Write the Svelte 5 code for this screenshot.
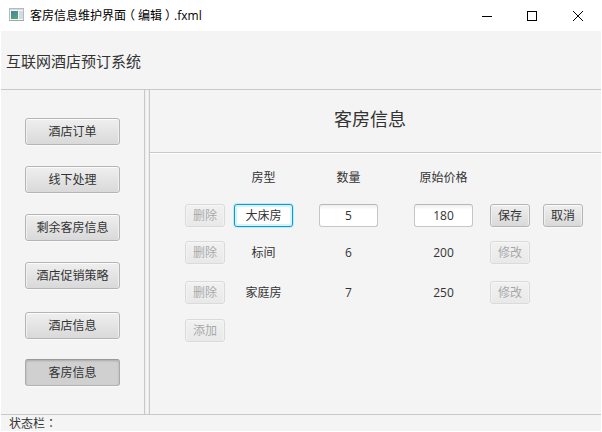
<script>
  const menu = ['酒店订单', '线下处理', '剩余客房信息', '酒店促销策略', '酒店信息', '客房信息'];
  const rooms = [
    { type: '标间', count: 6, price: 200 },
    { type: '家庭房', count: 7, price: 250 }
  ];
  let active = $state('客房信息');
  let draft = $state({ type: '大床房', count: '5', price: '180' });
</script>

<div class="window">
  <div class="titlebar">
    <svg class="app-icon" width="16" height="14" viewBox="0 0 16 14">
      <defs>
        <linearGradient id="pane" x1="0" y1="0" x2="0.6" y2="1">
          <stop offset="0" stop-color="#4a7fa8" />
          <stop offset="1" stop-color="#4fa876" />
        </linearGradient>
      </defs>
      <rect x="0.5" y="0.5" width="14" height="12" fill="#f4f6f7" stroke="#b4babf" />
      <rect x="1" y="1" width="13" height="1" fill="#d5dade" />
      <rect x="2" y="3" width="7" height="8" fill="url(#pane)" />
      <rect x="10" y="3" width="4" height="8" fill="#d3dce1" />
      <path d="M0 12.5H15" stroke="#a0a6aa" />
    </svg>
    <span class="title">客房信息维护界面<span class="paren">（</span>编辑<span class="paren">）</span>.fxml</span>
    <svg class="controls" width="103" height="12" viewBox="0 0 103 12" fill="none" stroke="#000">
      <path d="M0 6.5H10" />
      <rect x="45.5" y="1.5" width="9" height="9" />
      <path d="M91 1L101 11M101 1L91 11" />
    </svg>
  </div>
  <header>互联网酒店预订系统</header>
  <main>
    <nav>
      {#each menu as item}
        <button class:active={active === item} onclick={() => (active = item)}>{item}</button>
      {/each}
    </nav>
    <div class="divider"></div>
    <section>
      <h1>客房信息</h1>
      <div class="table">
        <div class="row head">
          <span></span><span>房型</span><span>数量</span><span>原始价格</span>
        </div>
        <div class="row edit">
          <button disabled>删除</button>
          <input class="focused" bind:value={draft.type} />
          <input bind:value={draft.count} />
          <input bind:value={draft.price} />
          <button>保存</button>
          <button>取消</button>
        </div>
        {#each rooms as room}
          <div class="row">
            <button disabled>删除</button>
            <span>{room.type}</span><span>{room.count}</span><span>{room.price}</span>
            <button disabled>修改</button>
          </div>
        {/each}
        <div class="row add"><button disabled>添加</button></div>
      </div>
    </section>
  </main>
  <footer>状态栏<span class="colon">：</span></footer>
</div>

<style>
  :global(body) {
    margin: 0;
    background: #fff;
  }
  .window {
    box-sizing: border-box;
    width: 602px;
    height: 432px;
    padding: 0 1px 1px;
    display: flex;
    flex-direction: column;
    background: #fff;
    color: #333;
    font: 12px 'Open Sans', 'Noto Sans CJK SC', sans-serif;
  }
  .titlebar {
    height: 31px;
    flex: none;
    display: flex;
    align-items: center;
    padding: 0 16px 0 8px;
    box-sizing: border-box;
    color: #000;
  }
  .app-icon {
    margin: 0 5px 1px 0;
  }
  .title {
    flex: 1;
    white-space: nowrap;
    line-height: 17px;
  }
  .paren {
    padding: 0 3px;
    font-feature-settings: 'halt';
  }
  .colon {
    font-family: 'Noto Sans CJK TC', sans-serif;
    line-height: 1;
  }
  header {
    height: 59px;
    flex: none;
    box-sizing: border-box;
    padding-left: 5px;
    background: #f4f4f4;
    border-bottom: 1px solid #c8c8c8;
    font-size: 15px;
    line-height: 61px;
  }
  main {
    height: 324px;
    flex: none;
    display: flex;
    background: #f4f4f4;
  }
  nav {
    width: 143px;
    flex: none;
    box-sizing: border-box;
    padding: 28px 0 0 24px;
    display: flex;
    flex-direction: column;
    gap: 21px;
  }
  button {
    box-sizing: border-box;
    display: block;
    width: 40px;
    height: 23px;
    margin: 0;
    padding: 0;
    border: 1px solid #b5b5b5;
    border-radius: 3px;
    background: linear-gradient(#efefef, #d9d9d9);
    box-shadow: inset 0 1px #fbfbfb, inset 1px 0 #f0f0f0, inset -1px 0 #f0f0f0, 0 1px #fafafa;
    color: #333;
    font: inherit;
    line-height: 20px;
    text-align: center;
    white-space: nowrap;
  }
  button:disabled {
    opacity: 0.4;
  }
  nav button {
    width: 95px;
    height: 27px;
    flex: none;
    line-height: 24px;
  }
  nav button:nth-child(5) {
    margin-top: 2px;
  }
  nav button:nth-child(6) {
    margin-top: -1px;
  }
  nav button.active {
    border-color: #999 #aaa #b2b2b2;
    background: #d0d0d0;
    box-shadow: inset 0 1px 2px #aaa, 0 1px #fafafa;
  }
  .divider {
    width: 6px;
    flex: none;
    box-sizing: border-box;
    border: solid #c8c8c8;
    border-width: 0 1px;
    background: linear-gradient(90deg, #ececec, #f8f8f8 60%, #e6e6e6);
  }
  section {
    flex: 1;
    min-width: 0;
  }
  h1 {
    height: 63px;
    box-sizing: border-box;
    margin: 0;
    padding-right: 11px;
    border-bottom: 1px solid #c8c8c8;
    box-shadow: 0 1px #fff;
    font-size: 18px;
    font-weight: 400;
    line-height: 59px;
    text-align: center;
  }
  .table {
    display: flex;
    flex-direction: column;
    padding: 13px 0 0 35px;
  }
  .row {
    display: grid;
    grid-template-columns: 40px 9px 59px 26px 59px 36px 59px 17px 40px 13px 40px;
    height: 23px;
    margin-bottom: 17px;
    line-height: 24px;
    text-align: center;
  }
  .row > :nth-child(2) {
    grid-column: 3;
  }
  .row > :nth-child(3) {
    grid-column: 5;
  }
  .row > :nth-child(4) {
    grid-column: 7;
  }
  .row > :nth-child(5) {
    grid-column: 9;
  }
  .row > :nth-child(6) {
    grid-column: 11;
  }
  .head {
    margin-bottom: 15px;
  }
  .edit {
    margin-bottom: 14px;
  }
  .row:nth-child(4) {
    margin-bottom: 15px;
  }
  input {
    box-sizing: border-box;
    width: 59px;
    height: 23px;
    padding: 0;
    border: 1px solid #c6c6c6;
    border-top-color: #b6b6b6;
    border-radius: 3px;
    background: linear-gradient(#f0f0f0, #fff 5px);
    color: #333;
    font: inherit;
    text-align: center;
    outline: none;
  }
  .focused {
    padding-top: 1px;
    border-color: #039ed3;
    background: #fff;
    box-shadow: inset 0 0 0 2px #d9f1fa, 0 0 0 1px #c5e8f3;
  }
  footer {
    height: 17px;
    flex: none;
    box-sizing: border-box;
    border-top: 1px solid #c8c8c8;
    background: #f4f4f4;
    padding-left: 8px;
    line-height: 18px;
  }
</style>
